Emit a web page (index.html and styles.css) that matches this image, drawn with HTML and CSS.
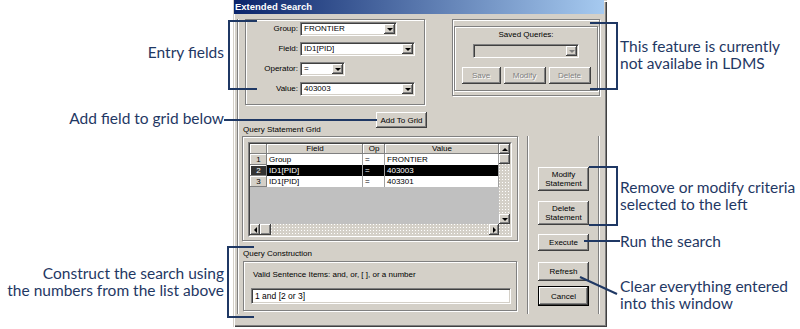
FILE: index.html
```html
<!DOCTYPE html>
<html>
<head>
	<title>Extended Search</title>
	<link rel="stylesheet" href="styles.css">
</head>
<body>

	<div class="page">

		<aside class="notes notes-left">
			<p class="n-entry">Entry fields</p>
			<p class="n-add">Add field to grid below</p>
			<p class="n-construct">Construct the search using<br>the numbers from the list above</p>
		</aside>

		<section class="dialog">
			<div class="titlebar">Extended Search</div>

			<div class="panel">
				<div class="top-row">
					<div class="group entry">
						<label>Group:</label>
						<div class="combo w-group"><span>FRONTIER</span><i class="drop"></i></div>
						<label>Field:</label>
						<div class="combo w-field"><span>ID1[PID]</span><i class="drop"></i></div>
						<label>Operator:</label>
						<div class="combo w-op"><span>=</span><i class="drop"></i></div>
						<label>Value:</label>
						<div class="combo w-value"><span>403003</span><i class="drop"></i></div>
					</div>

					<div class="group saved">
						<div class="group saved-inner">
							<div class="saved-title">Saved Queries:</div>
							<div class="combo disabled w-saved"><span></span><i class="drop"></i></div>
							<div class="saved-buttons">
								<button class="btn disabled b-save">Save</button>
								<button class="btn disabled b-modify">Modify</button>
								<button class="btn disabled b-delete">Delete</button>
							</div>
						</div>
					</div>
				</div>

				<div class="add-row">
					<div class="caption">Query Statement Grid</div>
					<button class="btn b-add">Add To Grid</button>
				</div>

				<div class="lower">
					<div class="lower-main">
						<div class="group grid-box">
							<div class="grid">
								<div class="grid-in">
									<div class="grid-main">
										<div class="grid-data">
											<div class="hd"></div><div class="hd">Field</div><div class="hd">Op</div><div class="hd">Value</div>
											<div class="num">1</div><div class="cell">Group</div><div class="cell">=</div><div class="cell">FRONTIER</div>
											<div class="num sel">2</div><div class="cell sel">ID1[PID]</div><div class="cell sel">=</div><div class="cell sel">403003</div>
											<div class="num">3</div><div class="cell">ID1[PID]</div><div class="cell">=</div><div class="cell">403301</div>
										</div>
										<div class="vscroll">
											<span class="sb up"></span>
											<span class="sb thumb"></span>
											<span class="track"></span>
											<span class="sb down"></span>
										</div>
									</div>
									<div class="hscroll">
										<span class="sb left"></span>
										<span class="sb thumb"></span>
										<span class="track"></span>
										<span class="sb right"></span>
										<span class="track corner"></span>
									</div>
								</div>
							</div>
						</div>

						<div class="caption caption-2">Query Construction</div>

						<div class="group construct">
							<div class="construct-text">Valid Sentence Items: and, or, [ ], or a number</div>
							<div class="query-input">1 and [2 or 3]</div>
						</div>
					</div>

					<div class="side">
						<button class="btn b-modstat">Modify<br>Statement</button>
						<button class="btn b-delstat">Delete<br>Statement</button>
						<button class="btn b-exec">Execute</button>
						<button class="btn b-refresh">Refresh</button>
						<button class="btn default b-cancel">Cancel</button>
					</div>
				</div>
			</div>
		</section>

		<aside class="notes notes-right">
			<p class="n-saved">This feature is currently<br>not availabe in LDMS</p>
			<p class="n-modify">Remove or modify criteria<br>selected to the left</p>
			<p class="n-run">Run the search</p>
			<p class="n-clear">Clear everything entered<br>into this window</p>
		</aside>

		<svg class="leaders" width="800" height="329" viewBox="0 0 800 329">
			<path d="M257 21H229V89H257"/>
			<path d="M224 120H377"/>
			<path d="M254 247H228V317H254"/>
			<path d="M590 23H617V89H590"/>
			<path d="M589 167H617V225H589"/>
			<path d="M584 241H620"/>
			<path d="M580 277L617 294"/>
		</svg>
	</div>

</body>
</html>
```

FILE: styles.css
```css
body {
	margin: 0;
	overflow: hidden;
	background-color: white;
}

.page {
	display: flex;
	width: 800px;
	height: 329px;
	position: relative;
}

/* Callout notes */
.notes {
	color: #1f3864;
	font-size: 15.5px;
	line-height: 17px;
	white-space: nowrap;
	font-family: Lato, 'Noto Sans', sans-serif;
}

.notes p {
	margin: 0;
}

.notes-left {
	flex: none;
	width: 233px;
	text-align: right;
	padding-right: 9px;
	box-sizing: border-box;
}

.notes-right {
	flex: 1;
	overflow: hidden;
	padding-left: 13px;
}

.notes-left .n-entry { margin-top: 44px; }
.notes-left .n-add { margin-top: 49px; }
.notes-left .n-construct { margin-top: 138px; }

.notes-right .n-saved { margin-top: 38px; }
.notes-right .n-modify { margin-top: 107px; }
.notes-right .n-run { margin-top: 20px; }
.notes-right .n-clear { margin-top: 28px; }

.leaders {
	top: 0;
	left: 0;
	position: absolute;
	pointer-events: none;
}

.leaders path {
	fill: none;
	stroke: #1f3864;
	stroke-width: 2;
}

/* Dialog */
.dialog {
	flex: none;
	width: 374px;
	height: 327px;
	color: black;
	font-size: 8px;
	background-color: #d4d0c8;
	font-family: 'Liberation Sans', Arial, sans-serif;
	box-shadow: inset 1px 1px #d4d0c8, inset 2px 2px white, inset -1px -1px #404040, inset -2px -2px #808080;
}

.titlebar {
	height: 14px;
	color: white;
	font-size: 9.5px;
	font-weight: bold;
	line-height: 14px;
	padding-left: 1px;
	margin: 0 3px 0 1px;
	background: linear-gradient(to right, #0a246a, #a6caf0);
}

.panel {
	margin: 5px 0 0 4px;
	border-left: 1px solid #808080;
	box-shadow: inset 1px 0 white;
}

.group {
	box-sizing: border-box;
	border: 1px solid #808080;
	box-shadow: inset 1px 1px white, 1px 1px white;
}

.top-row {
	display: flex;
	margin-top: 1px;
	align-items: flex-start;
}

.entry {
	width: 180px;
	height: 86px;
	display: grid;
	row-gap: 6px;
	column-gap: 2px;
	margin-left: 7px;
	padding-top: 2px;
	align-content: start;
	justify-items: start;
	grid-template-columns: 52px auto;
}

.entry label {
	line-height: 14px;
	justify-self: end;
}

.combo {
	display: flex;
	height: 14px;
	box-sizing: border-box;
	background-color: white;
	border: 1px solid;
	border-color: #808080 white white #808080;
	box-shadow: inset 1px 1px #404040, inset -1px -1px #d4d0c8;
}

.combo span {
	flex: 1;
	padding-left: 3px;
	line-height: 12px;
	white-space: nowrap;
}

.combo .drop {
	width: 11px;
	display: flex;
	margin: 1px 1px 1px 0;
	align-items: center;
	justify-content: center;
	background-color: #d4d0c8;
	box-shadow: inset -1px -1px #404040, inset 1px 1px white, inset -2px -2px #808080;
}

.combo .drop::after {
	content: '';
	border-style: solid;
	border-width: 3px 3px 0;
	border-color: black transparent transparent;
}

.combo.disabled {
	background-color: #d4d0c8;
}

.combo.disabled .drop::after {
	border-top-color: #808080;
}

.w-group { width: 97px; }
.w-field { width: 115px; }
.w-op { width: 45px; }
.w-value { width: 115px; }
.w-saved { width: 106px; margin: 5px auto 0; }

.saved {
	width: 148px;
	height: 77px;
	margin-left: 27px;
	padding: 6px 1px 4px;
}

.saved-inner {
	height: 65px;
	text-align: center;
}

.saved-title {
	line-height: 9px;
	padding-top: 3px;
}

.saved-buttons {
	gap: 3px;
	display: flex;
	margin-top: 9px;
	justify-content: center;
}

.saved-buttons .btn {
	height: 17px;
}

.b-save { width: 39px; }
.b-modify, .b-delete { width: 42px; }

/* Buttons */
.btn {
	padding: 0;
	border: 0;
	color: black;
	font: inherit;
	line-height: 9px;
	text-align: center;
	box-sizing: border-box;
	background-color: #d4d0c8;
	box-shadow: inset -1px -1px #404040, inset 1px 1px white, inset -2px -2px #808080;
}

.btn.disabled {
	color: #808080;
	text-shadow: 1px 1px white;
}

.btn.default {
	border: 1px solid black;
}

.add-row {
	display: flex;
	width: 189px;
	height: 24px;
	margin-top: 7px;
	justify-content: space-between;
}

.caption {
	line-height: 10px;
	padding-left: 5px;
	white-space: nowrap;
}

.add-row .caption {
	align-self: flex-end;
	margin-bottom: 1px;
}

.b-add {
	width: 51px;
	height: 16px;
}

.lower {
	display: flex;
	align-items: flex-start;
}

.lower-main {
	width: 280px;
}

.grid-box {
	width: 276px;
	height: 105px;
	margin-left: 4px;
	padding: 5px 0 0 5px;
}

/* Grid */
.grid {
	width: 264px;
	height: 95px;
	box-sizing: border-box;
	border: 1px solid;
	border-color: #808080 white white #808080;
}

.grid-in {
	height: 100%;
	display: flex;
	flex-direction: column;
	box-sizing: border-box;
	border: 1px solid;
	border-color: #404040 #d4d0c8 #d4d0c8 #404040;
}

.grid-main {
	display: flex;
	height: 80px;
}

.grid-data {
	width: 249px;
	display: grid;
	align-content: start;
	background-color: #c0c0c0;
	grid-template-rows: 10px repeat(3, 11px);
	grid-template-columns: 17px 96px 22px 114px;
}

.grid-data div {
	overflow: hidden;
	line-height: 10px;
	white-space: nowrap;
}

.grid-data .hd, .grid-data .num {
	text-align: center;
	background-color: #d4d0c8;
	box-shadow: inset -1px -1px #808080, inset 1px 1px white;
}

.grid-data .num {
	line-height: 11px;
}

.grid-data .cell {
	line-height: 11px;
	padding-left: 2px;
	background-color: white;
	border-right: 1px solid #a0a0a0;
}

.grid-data .cell.sel {
	color: white;
	background-color: black;
}

.grid-data .num.sel {
	color: white;
	background-color: #333;
}

.vscroll {
	width: 11px;
	display: flex;
	flex-direction: column;
}

.vscroll .sb {
	height: 10px;
}

.hscroll {
	display: flex;
	height: 11px;
}

.hscroll .sb {
	width: 10px;
}

.hscroll .thumb {
	width: 11px;
}

.track {
	flex: 1;
	background: conic-gradient(from 0deg at 1px 1px, #d4d0c8 75%, white 0) 0 0 / 3px 3px;
}

.track.corner {
	flex: none;
	width: 11px;
}

.sb {
	flex: none;
	display: flex;
	align-items: center;
	justify-content: center;
	background-color: #d4d0c8;
	box-shadow: inset -1px -1px #404040, inset 1px 1px white, inset -2px -2px #808080;
}

.sb::after {
	content: '';
	border-style: solid;
	border-color: transparent;
}

.sb.up::after { border-width: 0 3px 3px; border-bottom-color: black; }
.sb.down::after { border-width: 3px 3px 0; border-top-color: black; }
.sb.left::after { border-width: 3px 3px 3px 0; border-right-color: black; }
.sb.right::after { border-width: 3px 0 3px 3px; border-left-color: black; }
.sb.thumb::after { display: none; }

.caption-2 {
	height: 20px;
	padding-top: 8px;
	box-sizing: border-box;
}

.construct {
	width: 274px;
	height: 50px;
	margin-left: 5px;
}

.construct-text {
	line-height: 9px;
	padding: 8px 0 0 9px;
	white-space: nowrap;
}

.query-input {
	width: 260px;
	height: 16px;
	font-size: 8.5px;
	line-height: 14px;
	padding-left: 3px;
	margin: 9px 0 0 7px;
	box-sizing: border-box;
	background-color: white;
	border: 1px solid;
	border-color: #808080 white white #808080;
	box-shadow: inset 1px 1px #404040, inset -1px -1px #d4d0c8;
}

/* Right-hand column of buttons */
.side {
	width: 73px;
	height: 178px;
	display: flex;
	margin-left: 9px;
	padding-left: 10px;
	box-sizing: border-box;
	flex-direction: column;
	align-items: flex-start;
	border-left: 1px solid #808080;
	border-right: 1px solid white;
	box-shadow: inset 1px 0 white, inset -1px 0 #808080;
}

.side .btn {
	width: 51px;
}

.b-modstat { height: 24px; margin-top: 31px; }
.b-delstat { height: 24px; margin-top: 10px; }
.b-exec { height: 17px; margin-top: 9px; }
.b-refresh { height: 19px; margin-top: 11px; }
.b-cancel { height: 20px; margin-top: 5px; }
```
